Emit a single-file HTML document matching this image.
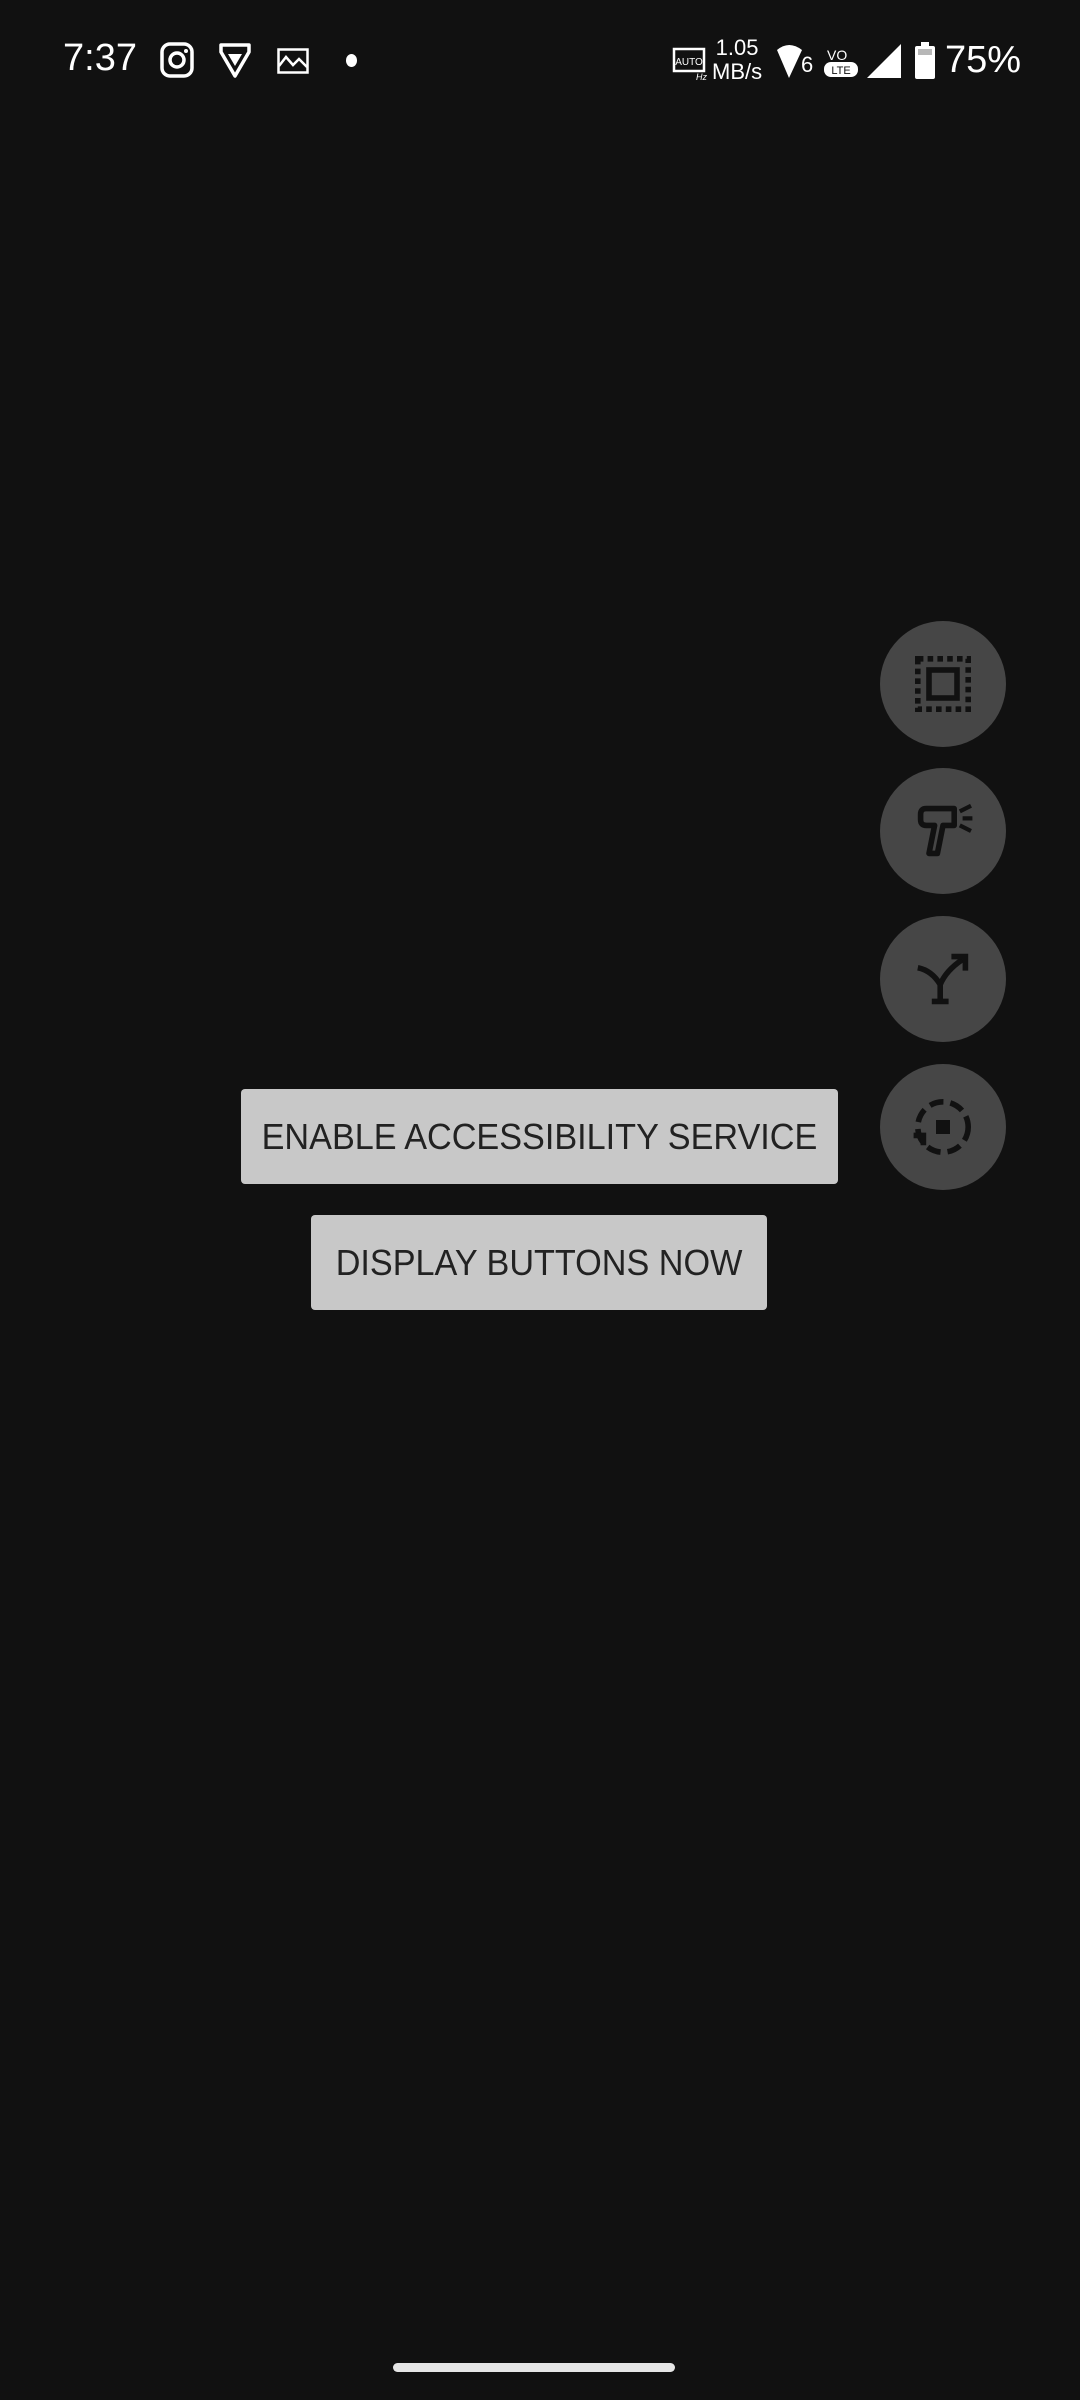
<!DOCTYPE html>
<html><head><meta charset="utf-8"><style>
html,body{margin:0;padding:0;}
body{width:1080px;height:2400px;background:#111111;position:relative;overflow:hidden;font-family:"Liberation Sans",sans-serif;}
.sb{position:absolute;color:#fff;}
.btn{position:absolute;background:#c8c8c8;border-radius:4px;color:#222;font-size:36px;display:flex;align-items:center;justify-content:center;white-space:nowrap;}
.btn span{display:inline-block;transform:scaleX(0.95);}
.fab{position:absolute;left:880px;width:126px;height:126px;border-radius:50%;background:#464646;}
.fab svg{position:absolute;left:21px;top:21px;}
</style></head><body>
<div class="sb" style="left:63px;top:37px;font-size:38px;">7:37</div>
<svg class="sb" style="left:160px;top:42px" width="34" height="36" viewBox="0 0 34 36"><rect x="2" y="2" width="30" height="32" rx="8" fill="none" stroke="#fff" stroke-width="3.5"/><circle cx="17" cy="18" r="7" fill="none" stroke="#fff" stroke-width="3.5"/><circle cx="26" cy="9" r="2" fill="#fff"/></svg>
<svg class="sb" style="left:218px;top:42px" width="34" height="36" viewBox="0 0 34 36"><path d="M3 3 H31 V10 L17 34 L3 10 Z" fill="none" stroke="#fff" stroke-width="3.5" stroke-linejoin="round"/><path d="M10 12 H24 L17 24 Z" fill="#fff"/></svg>
<svg class="sb" style="left:277px;top:48px" width="32" height="26" viewBox="0 0 32 26"><rect x="1.5" y="1.5" width="29" height="23" fill="none" stroke="#fff" stroke-width="2.5"/><path d="M2 18 L9 9 L16 17 L22 11 L30 19" fill="none" stroke="#fff" stroke-width="2.5"/></svg>
<div class="sb" style="left:346px;top:54px;width:11px;height:13px;border-radius:50%;background:#fff"></div>
<svg class="sb" style="left:672px;top:45px" width="36" height="36" viewBox="0 0 36 36"><rect x="2" y="4" width="30" height="22" fill="none" stroke="#fff" stroke-width="2.5"/><text x="17" y="20" font-size="10" fill="#fff" text-anchor="middle" font-family="Liberation Sans">AUTO</text><text x="24" y="35" font-size="9" fill="#fff" font-style="italic" font-family="Liberation Sans">Hz</text></svg>
<div class="sb" style="left:712px;top:36px;font-size:22px;line-height:24px;text-align:center;">1.05<br>MB/s</div>
<svg class="sb" style="left:775px;top:42px" width="40" height="38" viewBox="0 0 40 38"><path d="M2 8 Q14 -2 27 8 L14 36 Z" fill="#fff"/><text x="26" y="30" font-size="22" fill="#fff" font-family="Liberation Sans">6</text></svg>
<svg class="sb" style="left:823px;top:40px" width="36" height="40" viewBox="0 0 36 40"><text x="4" y="20" font-size="14" fill="#fff" font-family="Liberation Sans">VO</text><rect x="1" y="22" width="34" height="15" rx="7" fill="#fff"/><text x="18" y="34" font-size="11" fill="#111" text-anchor="middle" font-family="Liberation Sans">LTE</text></svg>
<svg class="sb" style="left:865px;top:43px" width="38" height="36" viewBox="0 0 38 36"><path d="M2 35 L36 1 V35 Z" fill="#fff"/></svg>
<svg class="sb" style="left:914px;top:42px" width="22" height="38" viewBox="0 0 22 38"><rect x="7" y="0" width="8" height="4" fill="#fff"/><rect x="1" y="4" width="20" height="33" rx="2" fill="#fff"/><rect x="4" y="7" width="14" height="6" fill="#111" opacity="0.3"/></svg>
<div class="sb" style="left:945px;top:39px;font-size:38px;">75%</div>

<div class="fab" style="top:621px"><svg width="84" height="84" viewBox="0 0 60 60"><rect x="12" y="12" width="36" height="36" fill="none" stroke="#111" stroke-width="4" stroke-dasharray="4 3"/><rect x="20" y="20" width="20" height="20" fill="none" stroke="#111" stroke-width="4"/></svg></div>
<div class="fab" style="top:768px"><svg width="84" height="84" viewBox="0 0 60 60"><path d="M14 18 Q14 14 18 14 H38 V26 H30 L26 46 H20 L24 26 H18 Q14 26 14 22 Z" fill="none" stroke="#111" stroke-width="4" stroke-linejoin="round"/><path d="M42 16 L50 12 M44 21 H51 M42 26 L50 30" stroke="#111" stroke-width="3"/></svg></div>
<div class="fab" style="top:916px"><svg width="84" height="84" viewBox="0 0 60 60"><path d="M12 22 Q22 24 28 34 V46 M22 46 H34 M28 34 Q32 24 44 16" fill="none" stroke="#111" stroke-width="4"/><path d="M36 14 H46 V24" fill="none" stroke="#111" stroke-width="4"/></svg></div>
<div class="fab" style="top:1064px"><svg width="84" height="84" viewBox="0 0 60 60"><circle cx="30" cy="30" r="18" fill="none" stroke="#111" stroke-width="4" stroke-dasharray="10 5"/><rect x="25" y="25" width="10" height="10" fill="#111"/><path d="M9 36 H16 V43" fill="none" stroke="#111" stroke-width="4"/></svg></div>

<div class="btn" style="left:241px;top:1089px;width:597px;height:95px;"><span>ENABLE ACCESSIBILITY SERVICE</span></div>
<div class="btn" style="left:311px;top:1215px;width:456px;height:95px;"><span>DISPLAY BUTTONS NOW</span></div>

<div style="position:absolute;left:393px;top:2363px;width:282px;height:9px;border-radius:5px;background:#e6e6e6"></div>
</body></html>
